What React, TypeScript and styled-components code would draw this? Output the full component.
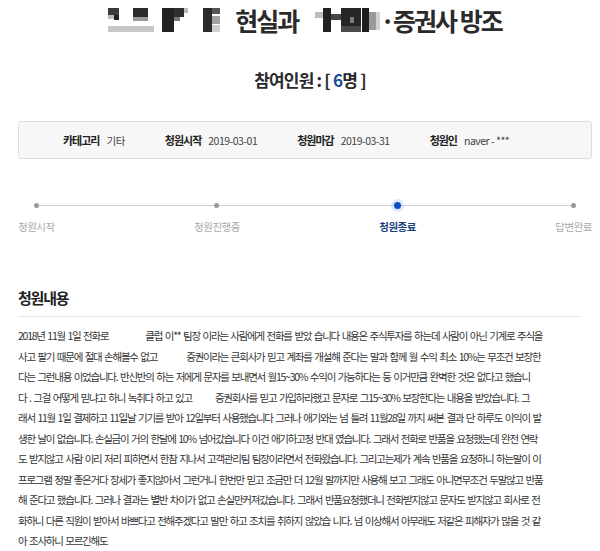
import React from 'react';
import styled, {createGlobalStyle} from 'styled-components';

type Rect = [number, number, number, number, string];
type Segment = string | {gap: number};

const GlobalStyle = createGlobalStyle`
  html, body {
    margin: 0;
    padding: 0;
    background: #fff;
  }
  body {
    font-family: 'Noto Sans CJK KR', 'Noto Sans', sans-serif;
    color: #333;
  }
`;

// pixelated (mosaic) parts of the title
const mosaicA: Rect[] = [
  [0, 1, 11, 7, '#3a3a3a'],
  [6, 8, 5, 5, '#222'],
  [0, 8, 6, 4, '#bdbdbd'],
  [25, 1, 15, 9, '#2a2a2a'],
  [25, 10, 15, 4, '#9a9a9a'],
  [54, 1, 12, 24, '#222'],
  [66, 1, 10, 9, '#303030'],
  [76, 1, 4, 5, '#bbb'],
  [66, 10, 6, 4, '#777'],
  [0, 19, 46, 6, '#c6c6c6'],
];

const mosaicB: Rect[] = [
  [0, 1, 9, 24, '#2b2b2b'],
  [9, 1, 8, 6, '#555'],
  [9, 9, 8, 8, '#a0a0a0'],
  [9, 18, 8, 7, '#cfcfcf'],
];

const mosaicC: Rect[] = [
  [2, 5, 8, 6, '#bdbdbd'],
  [10, 1, 8, 24, '#222'],
  [18, 7, 10, 6, '#474747'],
  [28, 1, 20, 24, '#262626'],
  [37, 10, 4, 6, '#7a7a7a'],
  [28, 19, 20, 6, '#4a4a4a'],
  [49, 1, 7, 24, '#1e1e1e'],
  [56, 5, 7, 18, '#9a9a9a'],
  [63, 5, 4, 18, '#d2d2d2'],
];

const lines: Segment[][] = [
  ['2018년 11월 1일 전화로', {gap: 37}, '클럽 이** 팀장 이라는 사람에게 전화를 받았 습니다 내용은 주식투자를 하는데 사람이 아닌 기계로 주식을'],
  ['사고 팔기 때문에 절대 손해볼수 없고', {gap: 29}, '증권이라는 큰회사가 믿고 계좌를 개설해 준다는 말과 함께 월 수익 최소 10%는 무조건 보장한'],
  ['다는 그런내용 이었습니다. 반신반의 하는 저에게 문자를 보내면서 월15~30% 수익이 가능하다는 등 이거만큼 완벽한 것은 없다고 했습니'],
  ['다 . 그걸 어떻게 믿냐고 하니 녹취다 하고 있고', {gap: 23}, '증권회사를 믿고 가입하라했고 문자로 그15~30% 보장한다는 내용을 받았습니다. 그'],
  ['래서 11월 1일 결제하고 11일날 기기를 받아 12일부터 사용했습니다 그러나 애기와는 넘 틀려 11월28일 까지 써본 결과 단 하루도 이익이 발'],
  ['생한 날이 없습니다. 손실금이 거의 한달에 10% 넘어갔습니다 이건 애기하고정 반대 였습니다. 그래서 전화로 반품을 요청했는데 완전 연락'],
  ['도 받지않고 사람 이리 저리 피하면서 한참 지나서 고객관리팀 팀장이라면서 전화왔습니다. 그리고는제가 계속 반품을 요청하니 하는말이 이'],
  ['프로그램 정말 좋은거다 장세가 좋지않아서 그런거니 한번만 믿고 조금만 더 12월 말까지만 사용해 보고 그래도 아니면무조건 두말않고 반품'],
  ['해 준다고 했습니다. 그러나 결과는 별반 차이가 없고 손실만커져갔습니다. 그래서 반품요청했더니 전화받지않고 문자도 받지않고 회사로 전'],
  ['화하니 다른 직원이 받아서 바쁘다고 전해주겠다고 말만 하고 조치를 취하지 않았습 니다. 넘 이상해서 아무래도 저같은 피해자가 많을 것 같'],
  ['아 조사하니 모르긴해도'],
];

const info = [
  {label: '카테고리', value: '기타'},
  {label: '청원시작', value: '2019-03-01'},
  {label: '청원마감', value: '2019-03-31'},
  {label: '청원인', value: 'naver - ***'},
];

const steps = ['청원시작', '청원진행중', '청원종료', '답변완료'];
const activeStep = 2;

const Mosaic = ({width, rects}: {width: number; rects: Rect[]}) => (
  <svg width={width} height={26} viewBox={`0 0 ${width} 26`}>
    {rects.map(([x, y, w, h, c], i) => (
      <rect key={i} x={x} y={y} width={w} height={h} fill={c} />
    ))}
  </svg>
);

const App = () => {
  return (
    <Page>
      <GlobalStyle />
      <Title>
        <Mosaic width={80} rects={mosaicA} />
        <Mosaic width={17} rects={mosaicB} />
        <span>현실과</span>
        <TitleGroup>
          <Mosaic width={67} rects={mosaicC} />
          <span>·증권사 방조</span>
        </TitleGroup>
      </Title>

      <Count>
        참여인원 : [ <CountNum>6</CountNum>명 ]
      </Count>

      <InfoBar>
        {info.map(item => (
          <InfoItem key={item.label}>
            <InfoLabel>{item.label}</InfoLabel>
            <InfoValue>{item.value}</InfoValue>
          </InfoItem>
        ))}
      </InfoBar>

      <Steps>
        {steps.map((s, i) => (
          <Step key={s}>
            <Dot $active={i === activeStep} />
            <StepLabel $active={i === activeStep}>{s}</StepLabel>
          </Step>
        ))}
      </Steps>

      <SectionTitle>청원내용</SectionTitle>
      <Divider />
      <Body>
        {lines.map((segs, i) => (
          <Line key={i}>
            {segs.map((seg, j) =>
              typeof seg === 'string' ? (
                <React.Fragment key={j}>{seg}</React.Fragment>
              ) : (
                <Blank key={j} $width={seg.gap} />
              ),
            )}
          </Line>
        ))}
      </Body>
    </Page>
  );
};

export default App;

const Page = styled.div`
  width: 600px;
  padding: 0 8px 0 18px;
  box-sizing: border-box;
`;

const Title = styled.h1`
  margin: 0;
  height: 40px;
  display: flex;
  align-items: center;
  justify-content: center;
  gap: 15px;
  font-size: 25px;
  font-weight: 700;
  letter-spacing: -2px;
  color: #2a2a2a;
  svg {
    display: block;
  }
`;

const TitleGroup = styled.span`
  display: flex;
  align-items: center;
`;

const Count = styled.div`
  margin-top: 28px;
  line-height: 24px;
  text-align: center;
  font-size: 17px;
  font-weight: 700;
  letter-spacing: -0.8px;
  color: #2a2a2a;
  padding-left: 10px;
`;

const CountNum = styled.span`
  color: #1a4a9c;
`;

const InfoBar = styled.div`
  margin-top: 29px;
  height: 38px;
  box-sizing: border-box;
  display: flex;
  align-items: center;
  gap: 40px;
  padding-left: 44px;
  background: #f7f7f7;
  border: 1px solid #dcdcdc;
  border-radius: 3px;
`;

const InfoItem = styled.div`
  display: flex;
  align-items: center;
  gap: 7px;
`;

const InfoLabel = styled.span`
  font-size: 11px;
  font-weight: 700;
  letter-spacing: -1px;
  color: #222;
`;

const InfoValue = styled.span`
  font-size: 10.5px;
  letter-spacing: -0.5px;
  color: #444;
`;

const Steps = styled.div`
  position: relative;
  margin-top: 40px;
  display: flex;
  justify-content: space-between;
  &::before {
    content: '';
    position: absolute;
    top: 6px;
    left: 19px;
    right: 18px;
    height: 1px;
    background: #cfcfcf;
  }
`;

const Step = styled.div`
  display: flex;
  flex-direction: column;
  align-items: center;
  gap: 9px;
`;

const Dot = styled.span<{$active: boolean}>`
  position: relative;
  z-index: 1;
  width: 13px;
  height: 13px;
  display: flex;
  align-items: center;
  justify-content: center;
  border-radius: 50%;
  background: ${p => (p.$active ? 'rgba(64, 140, 255, 0.18)' : 'transparent')};
  margin-bottom: -1px;
  &::after {
    content: '';
    width: ${p => (p.$active ? 7 : 5)}px;
    height: ${p => (p.$active ? 7 : 5)}px;
    border-radius: 50%;
    background: ${p => (p.$active ? '#0b52c0' : '#9a9a9a')};
  }
`;

const StepLabel = styled.span<{$active: boolean}>`
  line-height: 14px;
  font-size: 10.5px;
  letter-spacing: -0.5px;
  font-weight: ${p => (p.$active ? 700 : 400)};
  color: ${p => (p.$active ? '#1b3f7d' : '#a8a8a8')};
`;

const SectionTitle = styled.h2`
  margin: 55px 0 0;
  line-height: 18px;
  font-size: 15px;
  font-weight: 700;
  letter-spacing: -1.2px;
  color: #222;
`;

const Divider = styled.div`
  margin: 9px 12px 0 0;
  height: 1px;
  background: #e6e6e6;
`;

const Body = styled.div`
  padding-top: 9px;
  font-size: 10.5px;
  letter-spacing: -1.25px;
  word-spacing: 1.5px;
  color: #333;
`;

const Line = styled.div`
  line-height: 20.5px;
  white-space: nowrap;
`;

const Blank = styled.span<{$width: number}>`
  display: inline-block;
  width: ${p => p.$width}px;
`;
